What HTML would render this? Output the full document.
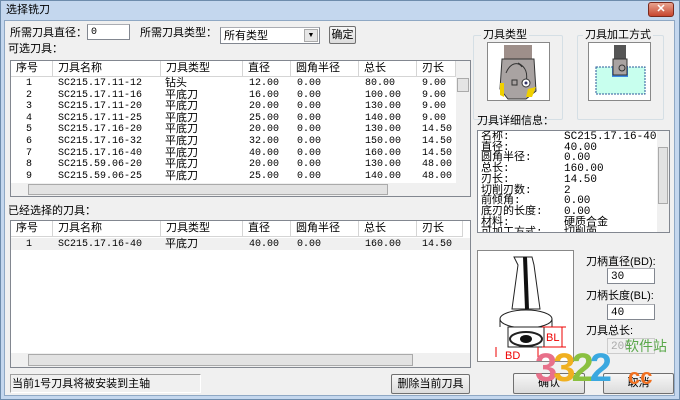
<!DOCTYPE html>
<html><head><meta charset="utf-8"><style>
*{box-sizing:border-box;margin:0;padding:0}
body{width:680px;height:400px;overflow:hidden;background:#5a8ab0;font-family:"Liberation Sans","Noto Sans CJK SC",sans-serif;font-size:11px;color:#000;position:relative}
.a{position:absolute}
.win{left:0;top:0;width:680px;height:400px;background:#c4d7ee;border:1px solid #6e8cac}
.body{left:4px;top:20px;width:671px;height:376px;background:#f0f0f0;border:1px solid #8fa8c4}
.t{position:absolute;white-space:nowrap;line-height:12px;font-size:11px}
.m{font-family:"Liberation Mono","Noto Sans CJK SC",monospace;font-size:10px}
.inp{position:absolute;background:#fff;border:1px solid #828790;border-top-color:#abadb3}
.btn{position:absolute;background:linear-gradient(#f6f6f6,#dcdcdc);border:1px solid #707070;border-radius:2px;text-align:center;line-height:16px;font-size:11px}
.list{position:absolute;background:#fff;border:1px solid #828790}
.hd{position:absolute;top:0;height:16px;background:#fff;border-right:1px solid #d5d5d5;border-bottom:1px solid #d5d5d5;padding-left:5px;line-height:15px;font-size:11px}
.sb{position:absolute;background:#eaeaea}
.grp{position:absolute;border:1px solid #d5dfe5;border-radius:2px}
.r{position:absolute;left:0;width:445px;height:11.6px}
.r span{position:absolute;top:0;line-height:11.6px;font-family:"Liberation Mono","Noto Sans CJK SC",monospace;font-size:10px;white-space:nowrap}
.r span:nth-child(1){left:15px}.r span:nth-child(2){left:47px}.r span:nth-child(3){left:154px;font-family:"Noto Sans CJK SC",sans-serif;font-size:11px;line-height:11px;top:-1px}
.r span:nth-child(4){left:238px}.r span:nth-child(5){left:286px}.r span:nth-child(6){left:354px}.r span:nth-child(7){left:411px}
.d{position:absolute;left:3px;height:10.7px;width:180px}
.d span{position:absolute;top:0;line-height:10.7px;font-size:11px;white-space:nowrap;font-family:"Liberation Mono","Noto Sans CJK SC",monospace}
.d span:nth-child(2){left:83px}
</style></head><body>
<div class="a win"></div>
<div class="t" style="left:6px;top:4px">选择铣刀</div>
<div class="a" style="left:648px;top:2px;width:26px;height:15px;background:linear-gradient(#e8a38f,#c7452e);border:1px solid #7a2a1e;border-radius:3px;color:#fff;text-align:center;font-size:11px;line-height:13px;font-weight:bold">✕</div>
<div class="a body"></div>

<div class="t" style="left:10px;top:27px">所需刀具直径：</div>
<div class="inp" style="left:87px;top:24px;width:43px;height:16px"><span class="t m" style="left:3px;top:2px">0</span></div>
<div class="t" style="left:140px;top:27px">所需刀具类型：</div>
<div class="inp" style="left:220px;top:27px;width:100px;height:17px"><span class="t" style="left:3px;top:2px">所有类型</span><div class="a" style="right:1px;top:1px;width:14px;height:13px;background:#e6e6e6;border:1px solid #aaa;font-size:7px;text-align:center;line-height:12px">▼</div></div>
<div class="btn" style="left:329px;top:26px;width:27px;height:18px">确定</div>
<div class="t" style="left:8px;top:43px">可选刀具：</div>

<div class="list" style="left:10px;top:60px;width:461px;height:137px">
 <div class="hd" style="left:0;width:42px">序号</div>
 <div class="hd" style="left:42px;width:108px">刀具名称</div>
 <div class="hd" style="left:150px;width:82px">刀具类型</div>
 <div class="hd" style="left:232px;width:48px">直径</div>
 <div class="hd" style="left:280px;width:68px">圆角半径</div>
 <div class="hd" style="left:348px;width:58px">总长</div>
 <div class="hd" style="left:406px;width:39px">刃长</div>
 <div class="sb" style="left:445px;top:0;width:14px;height:122px;background:#f0f0f0"><div class="a" style="left:1px;top:17px;width:12px;height:14px;background:#e4e4e4;border:1px solid #aaa"></div></div>
 <div class="sb" style="left:0;top:122px;width:445px;height:13px;background:#f0f0f0"><div class="a" style="left:17px;top:1px;width:360px;height:11px;background:#e2e2e2;border:1px solid #aaa"></div></div>
 <div class="sb" style="left:445px;top:122px;width:14px;height:13px;background:#f0f0f0"></div>
 <div style="position:absolute;left:0;top:17px;width:445px">
 <div class="r" style="top:0"><span>1</span><span>SC215.17.11-12</span><span>钻头</span><span>12.00</span><span>0.00</span><span>80.00</span><span>9.00</span></div>
 <div class="r" style="top:11.6px"><span>2</span><span>SC215.17.11-16</span><span>平底刀</span><span>16.00</span><span>0.00</span><span>100.00</span><span>9.00</span></div>
 <div class="r" style="top:23.2px"><span>3</span><span>SC215.17.11-20</span><span>平底刀</span><span>20.00</span><span>0.00</span><span>130.00</span><span>9.00</span></div>
 <div class="r" style="top:34.8px"><span>4</span><span>SC215.17.11-25</span><span>平底刀</span><span>25.00</span><span>0.00</span><span>140.00</span><span>9.00</span></div>
 <div class="r" style="top:46.4px"><span>5</span><span>SC215.17.16-20</span><span>平底刀</span><span>20.00</span><span>0.00</span><span>130.00</span><span>14.50</span></div>
 <div class="r" style="top:58px"><span>6</span><span>SC215.17.16-32</span><span>平底刀</span><span>32.00</span><span>0.00</span><span>150.00</span><span>14.50</span></div>
 <div class="r" style="top:69.6px"><span>7</span><span>SC215.17.16-40</span><span>平底刀</span><span>40.00</span><span>0.00</span><span>160.00</span><span>14.50</span></div>
 <div class="r" style="top:81.2px"><span>8</span><span>SC215.59.06-20</span><span>平底刀</span><span>20.00</span><span>0.00</span><span>130.00</span><span>48.00</span></div>
 <div class="r" style="top:92.8px"><span>9</span><span>SC215.59.06-25</span><span>平底刀</span><span>25.00</span><span>0.00</span><span>140.00</span><span>48.00</span></div>
 </div>
</div>

<div class="t" style="left:8px;top:205px">已经选择的刀具：</div>
<div class="list" style="left:10px;top:220px;width:461px;height:148px">
 <div class="hd" style="left:0;width:42px">序号</div>
 <div class="hd" style="left:42px;width:108px">刀具名称</div>
 <div class="hd" style="left:150px;width:82px">刀具类型</div>
 <div class="hd" style="left:232px;width:48px">直径</div>
 <div class="hd" style="left:280px;width:68px">圆角半径</div>
 <div class="hd" style="left:348px;width:58px">总长</div>
 <div class="hd" style="left:406px;width:46px">刃长</div>
 <div class="a" style="left:0;top:17px;width:459px;height:12px;background:#f0f0f0"></div>
 <div class="r" style="top:17.5px"><span>1</span><span>SC215.17.16-40</span><span>平底刀</span><span>40.00</span><span>0.00</span><span>160.00</span><span>14.50</span></div>
 <div class="sb" style="left:0;top:132px;width:459px;height:14px;background:#f0f0f0"><div class="a" style="left:17px;top:1px;width:385px;height:12px;background:#e2e2e2;border:1px solid #aaa"></div></div>
</div>

<div class="a" style="left:10px;top:374px;width:191px;height:19px;border:1px solid #a0a0a0;border-right-color:#fff;border-bottom-color:#fff"></div>
<div class="t" style="left:12px;top:378px">当前1号刀具将被安装到主轴</div>
<div class="btn" style="left:391px;top:374px;width:79px;height:20px;line-height:18px">删除当前刀具</div>

<div class="grp" style="left:473px;top:35px;width:90px;height:85px"></div>
<div class="t" style="left:481px;top:29px;background:#f0f0f0;padding:0 2px">刀具类型</div>
<div class="a" style="left:487px;top:42px;width:63px;height:59px;background:#fff;border:1px solid #888">
 <svg width="61" height="57" viewBox="0 0 61 57"><rect x="16" y="2" width="28" height="14" fill="#9e8f8a"/><path d="M14 16 L46 16 L48 48 L38 56 L20 56 L12 46 Z" fill="#a9a3a2" stroke="#333"/><path d="M18 30 C22 20 30 18 34 24 M30 20 C38 24 40 30 38 40" fill="none" stroke="#333"/><circle cx="38" cy="40" r="4" fill="#fff" stroke="#333"/><circle cx="38" cy="40" r="1.5" fill="#336"/><rect x="24" y="37" width="5" height="5" fill="none" stroke="#333"/><path d="M12 40 L16 40 L16 54 L12 52 Z" fill="#f0d000"/><path d="M40 46 L48 44 L44 54 L38 54 Z" fill="#f0d000"/></svg>
</div>
<div class="grp" style="left:577px;top:35px;width:87px;height:85px"></div>
<div class="t" style="left:583px;top:29px;background:#f0f0f0;padding:0 2px">刀具加工方式</div>
<div class="a" style="left:588px;top:42px;width:63px;height:59px;background:#fff;border:1px solid #888">
 <svg width="61" height="57" viewBox="0 0 61 57"><rect x="7" y="24" width="49" height="27" fill="#c8ffee" stroke="#2a5a9a" stroke-dasharray="2,1"/><rect x="23" y="23" width="16" height="11" fill="#3d8be8"/><rect x="25" y="2" width="12" height="14" fill="#555"/><rect x="24" y="16" width="14" height="16" fill="#a9a3a2" stroke="#333"/><circle cx="33" cy="25" r="3" fill="none" stroke="#333"/></svg>
</div>

<div class="t" style="left:477px;top:115px">刀具详细信息：</div>
<div class="a" style="left:477px;top:130px;width:193px;height:103px;background:#fff;border:1px solid #828790;overflow:hidden">
 <div class="a" style="right:0;top:0;width:12px;height:101px;background:#f0f0f0;z-index:2"><div class="a" style="left:1px;top:16px;width:10px;height:57px;background:#e2e2e2;border:1px solid #aaa"></div></div>
 <div class="d" style="top:1px"><span>名称:</span><span>SC215.17.16-40</span></div>
 <div class="d" style="top:11.7px"><span>直径:</span><span>40.00</span></div>
 <div class="d" style="top:22.4px"><span>圆角半径:</span><span>0.00</span></div>
 <div class="d" style="top:33.1px"><span>总长:</span><span>160.00</span></div>
 <div class="d" style="top:43.8px"><span>刃长:</span><span>14.50</span></div>
 <div class="d" style="top:54.5px"><span>切削刃数:</span><span>2</span></div>
 <div class="d" style="top:65.2px"><span>前倾角:</span><span>0.00</span></div>
 <div class="d" style="top:75.9px"><span>底刃的长度:</span><span>0.00</span></div>
 <div class="d" style="top:86.6px"><span>材料:</span><span>硬质合金</span></div>
 <div class="d" style="top:97.3px"><span>可加工方式:</span><span>切削面</span></div>
</div>

<div class="a" style="left:477px;top:250px;width:97px;height:112px;background:#fff;border:1px solid #888">
 <svg width="95" height="110" viewBox="0 0 95 110"><path d="M36 6 L54 6 L56 14 L62 58 L34 58 L40 14 Z" fill="#fff" stroke="#222"/><path d="M47 6 L49 58" stroke="#111" stroke-width="4"/><ellipse cx="48" cy="68" rx="26" ry="9" fill="#fff" stroke="#222"/><path d="M22 68 L22 76 M74 68 L74 76" stroke="#222"/><rect x="30" y="76" width="36" height="20" fill="#fff" stroke="#222"/><ellipse cx="48" cy="88" rx="16" ry="7" fill="#fff" stroke="#222" stroke-width="2"/><ellipse cx="48" cy="88" rx="6" ry="4" fill="#111"/><path d="M64 76 L88 76 M64 96 L88 96 M84 76 L84 96 M18 96 L18 106 M60 96 L60 106" stroke="#e00" fill="none"/><text x="68" y="90" fill="#e00" font-size="11" font-family="Liberation Sans">BL</text><text x="27" y="108" fill="#e00" font-size="11" font-family="Liberation Sans">BD</text></svg>
</div>
<div class="t" style="left:586px;top:256px">刀柄直径(BD):</div>
<div class="inp" style="left:607px;top:268px;width:48px;height:16px"><span class="t m" style="left:3px;top:2px;font-size:11px">30</span></div>
<div class="t" style="left:586px;top:290px">刀柄长度(BL):</div>
<div class="inp" style="left:607px;top:304px;width:48px;height:16px"><span class="t m" style="left:3px;top:2px;font-size:11px">40</span></div>
<div class="t" style="left:586px;top:325px">刀具总长:</div>
<div class="inp" style="left:607px;top:338px;width:48px;height:16px;background:#f0f0f0;border-color:#ccc"><span class="t m" style="left:3px;top:2px;font-size:11px;color:#aaa">200</span></div>

<div class="btn" style="left:513px;top:373px;width:72px;height:21px;line-height:19px">确认</div>
<div class="btn" style="left:603px;top:373px;width:71px;height:21px;line-height:19px">取消</div>
<div class="t" style="left:535px;top:346px;font-size:40px;line-height:44px;font-weight:bold;font-family:'Liberation Sans',sans-serif;letter-spacing:-4px"><span style="color:#e8708a">3</span><span style="color:#f0b020">3</span><span style="color:#8ac040">2</span><span style="color:#3aa8e0">2</span></div>
<div class="t" style="left:625px;top:340px;color:#5aa84a;font-size:14px">软件站</div>
<div class="t" style="left:628px;top:365px;color:#f07020;font-size:22px;font-weight:bold;line-height:24px">cc</div>
</body></html>
